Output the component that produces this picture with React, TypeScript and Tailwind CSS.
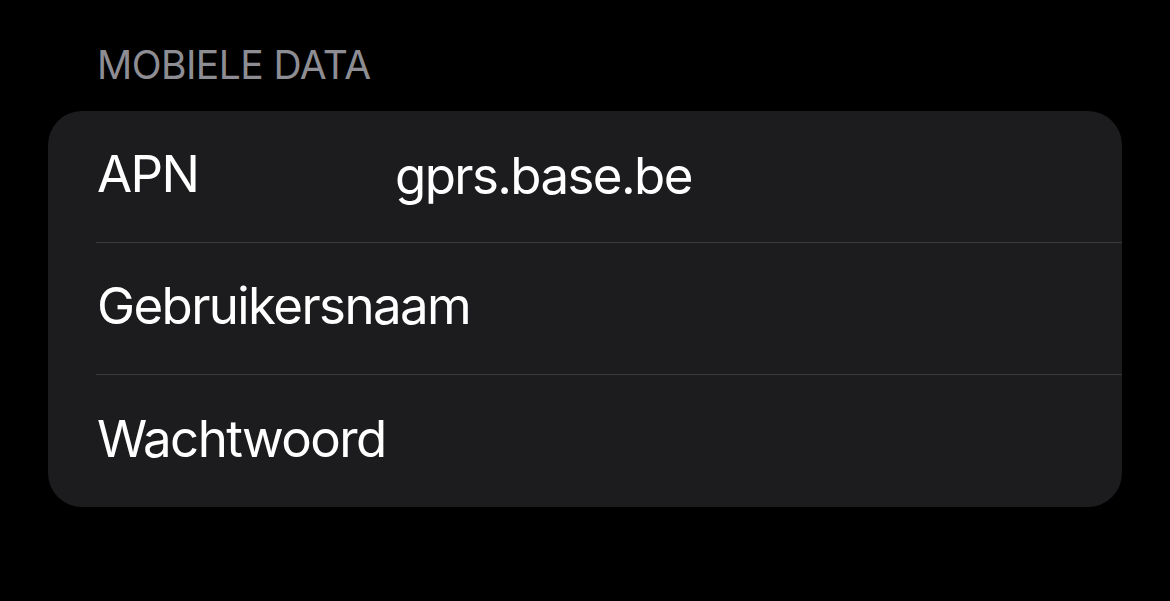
import React from 'react';

const rows = [
  { label: 'APN', value: 'gprs.base.be' },
  { label: 'Gebruikersnaam', value: '' },
  { label: 'Wachtwoord', value: '' },
];

export default function App() {
  return (
    <div
      className="h-[601px] w-full bg-black px-[48px] pt-[41px] antialiased"
      style={{ fontFamily: 'Inter, "Noto Sans", sans-serif' }}
    >
      {/* section header */}
      <div className="pl-[49px] text-[39px] leading-[47px] tracking-[-0.55px] text-[#8d8d93]">
        MOBIELE DATA
      </div>

      <div className="mt-[23px] overflow-hidden rounded-[34px] bg-[#1c1c1e]">
        {rows.map((row, i) => (
          <div key={row.label} className="pl-[48px]">
            <div
              className={
                'flex h-[132px] items-center pl-[1px] text-[51px] tracking-[-1.6px] text-white ' +
                (i < rows.length - 1 ? 'border-b-[1.5px] border-[#3a3a3c]' : '')
              }
            >
              <span className="w-[298px] shrink-0 -translate-y-[2px]">{row.label}</span>
              {row.value && <span>{row.value}</span>}
            </div>
          </div>
        ))}
      </div>
    </div>
  );
}
